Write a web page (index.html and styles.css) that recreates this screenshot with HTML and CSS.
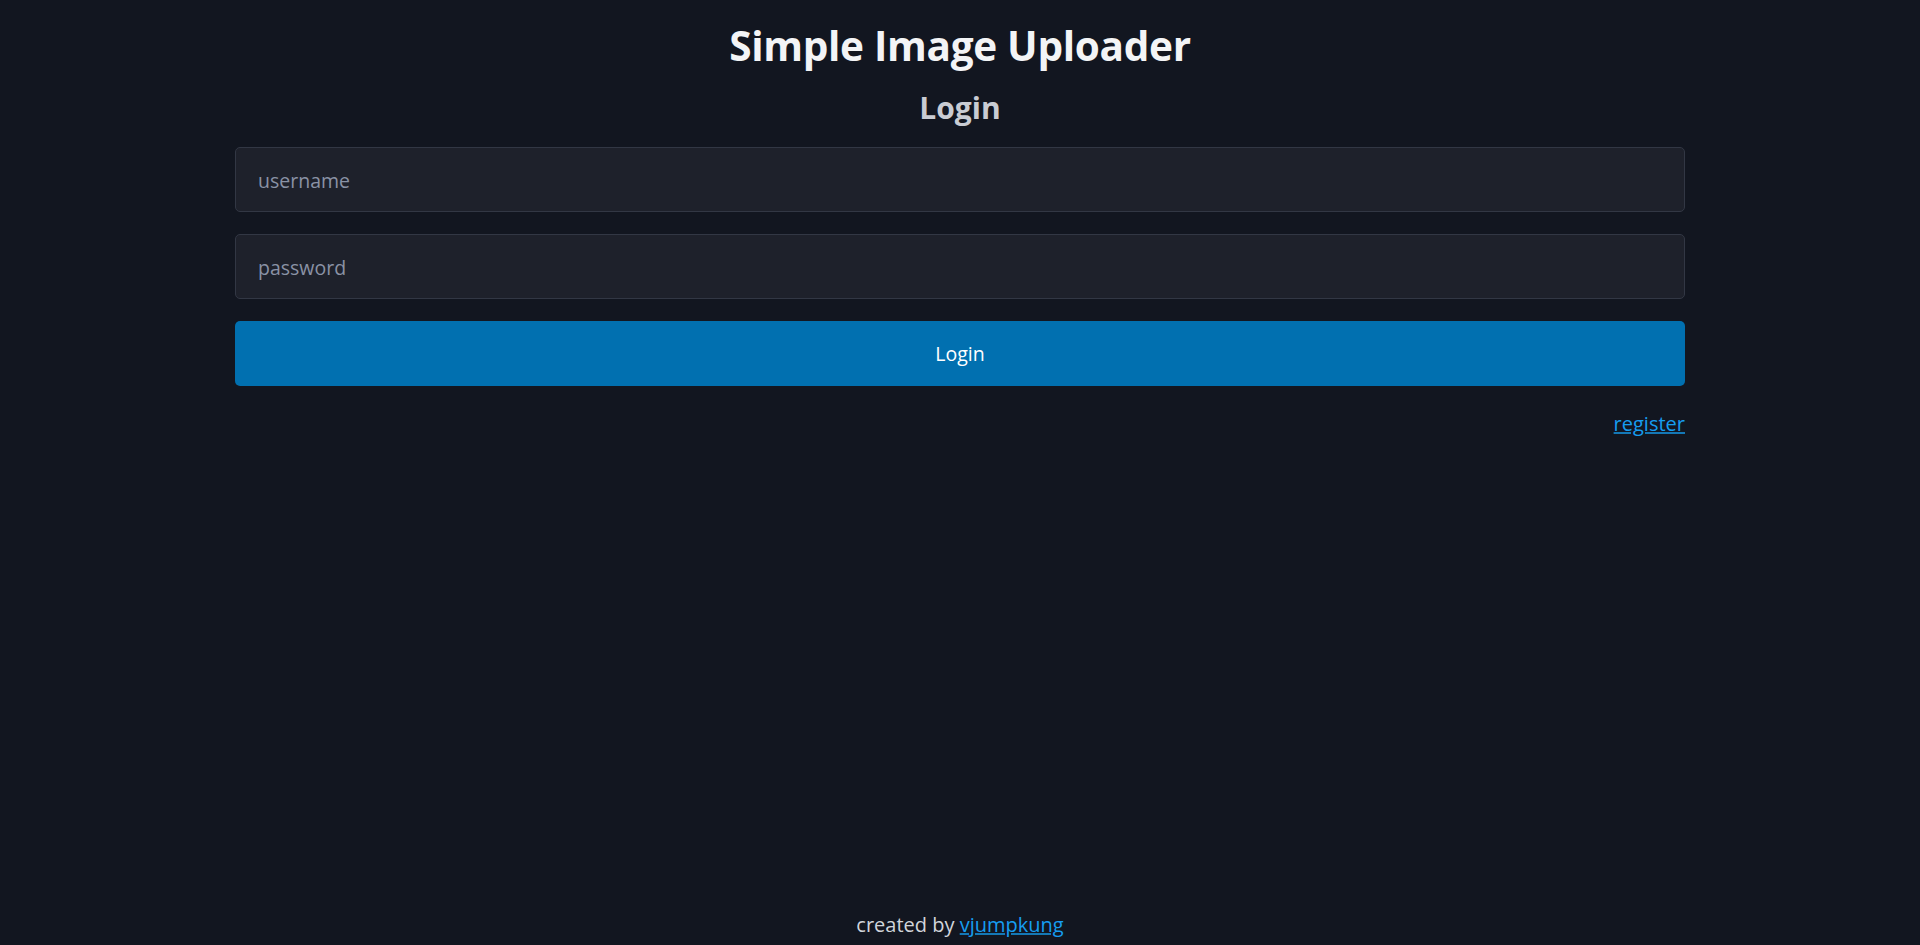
FILE: index.html
```html
<!DOCTYPE html>
<html lang="en">
<head>
<meta charset="utf-8">
<title>Simple Image Uploader</title>
<link rel="stylesheet" href="styles.css">
</head>
<body>
<div class="page">
  <main class="main">
    <h1 class="title">Simple Image Uploader</h1>
    <h2 class="subtitle">Login</h2>
    <form class="form">
      <input class="field" type="text" placeholder="username">
      <input class="field" type="password" placeholder="password">
      <button class="btn" type="button">Login</button>
    </form>
    <div class="links"><a class="link" href="#">register</a></div>
  </main>
  <footer class="footer">created by <a class="link" href="#">vjumpkung</a></footer>
</div>
</body>
</html>
```
FILE: styles.css
```css
* { box-sizing: border-box; }
html, body { margin: 0; padding: 0; }
body {
  background: #121620;
  color: #f3f4f6;
  font-family: "Open Sans", "Noto Sans", sans-serif;
}
.page {
  min-height: 100vh;
  display: flex;
  flex-direction: column;
  align-items: center;
}
.main {
  width: 1450px;
  flex: 1;
  display: flex;
  flex-direction: column;
  padding-top: 16px;
}
.title {
  margin: 0 0 12px;
  text-align: center;
  font-size: 40.5px;
  line-height: 60px;
  font-weight: 700;
  color: #f3f4f6;
  letter-spacing: -0.3px;
}
.subtitle {
  margin: 0;
  text-align: center;
  font-size: 30px;
  line-height: 40px;
  font-weight: 700;
  color: #c9ccd3;
}
.form {
  display: flex;
  flex-direction: column;
  gap: 22px;
  margin-top: 19px;
}
.field {
  height: 65px;
  padding: 2px 22px 0;
  background: #1e212b;
  border: 1px solid #323744;
  border-radius: 5px;
  color: #e5e7eb;
  font-family: inherit;
  font-size: 19.5px;
  outline: none;
}
.field::placeholder { color: #8a92a5; }
.btn {
  height: 65px;
  background: #0170b0;
  border: none;
  border-radius: 5px;
  color: #ffffff;
  font-family: inherit;
  font-size: 19.5px;
}
.links {
  display: flex;
  justify-content: flex-end;
  margin-top: 24px;
  font-size: 20px;
  line-height: 28px;
}
.link {
  color: #169df0;
  text-decoration: underline;
  text-decoration-color: #1478b6;
}
.footer {
  font-size: 20px;
  line-height: 28px;
  color: #d1d5db;
  padding-bottom: 6px;
}
```
